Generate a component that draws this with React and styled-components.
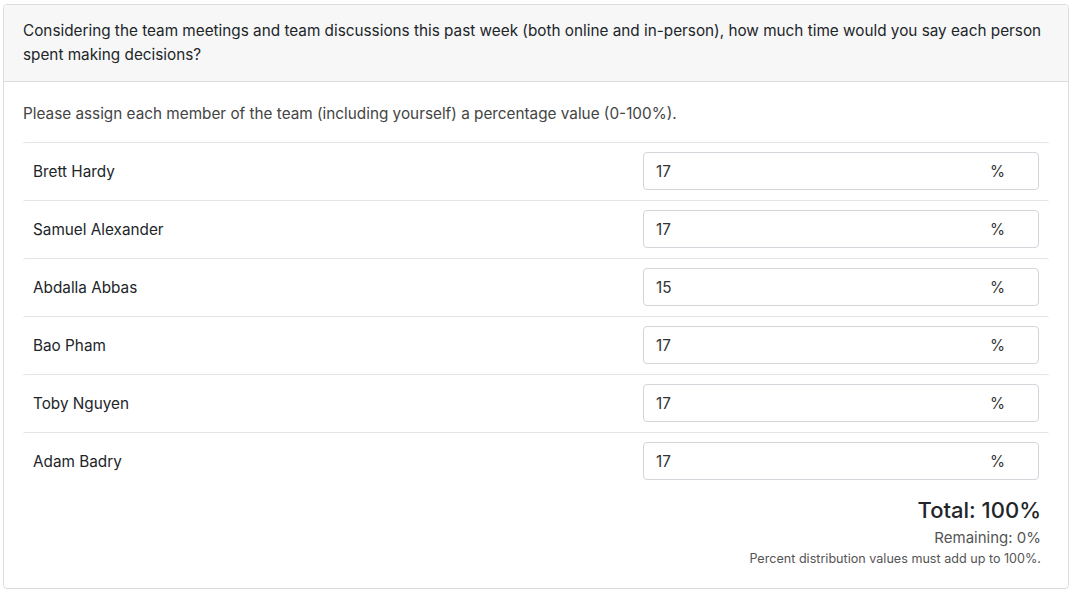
import React from "react";
import styled, { createGlobalStyle } from "styled-components";

const GlobalStyle = createGlobalStyle`
  body {
    margin: 0;
    background: #fff;
    font-family: Inter, "Helvetica Neue", Arial, sans-serif;
    color: #212529;
  }
`;

const Card = styled.div`
  margin: 4px 3px;
  border: 1px solid #dcdcdc;
  border-radius: 4px;
  overflow: hidden;
`;

const Header = styled.div`
  background: #f7f7f7;
  border-bottom: 1px solid #dcdcdc;
  padding: 14px 19px;
  font-size: 15.3px;
  line-height: 24px;
`;

const Body = styled.div`
  padding: 20px 19px 19px;
`;

const Intro = styled.p`
  margin: 0 0 16px;
  font-size: 15.3px;
  line-height: 24px;
  color: #444;
`;

const Table = styled.div`
  display: flex;
  flex-direction: column;
`;

const Row = styled.div`
  display: grid;
  grid-template-columns: 1fr 396px;
  align-items: center;
  padding: 9px 10px 10px 10px;
  border-top: 1px solid #e2e4e7;
  border-radius: 3px;
`;

const Name = styled.div`
  font-size: 15.3px;
`;

const InputBox = styled.div`
  display: flex;
  align-items: center;
  justify-content: space-between;
  height: 36px;
  border: 1px solid #d2d5d9;
  border-radius: 4px;
  padding: 0 33px 0 12px;
  font-size: 15.3px;
  color: #333;
`;

const Summary = styled.div`
  display: flex;
  flex-direction: column;
  align-items: flex-end;
  padding-right: 8px;
`;

const Total = styled.div`
  font-size: 22px;
  font-weight: 500;
  line-height: 30px;
  margin-top: 5px;
`;

const Remaining = styled.div`
  font-size: 15px;
  line-height: 23px;
  margin-top: 1px;
  color: #555;
`;

const Note = styled.div`
  font-size: 12.6px;
  line-height: 20px;
  color: #555;
`;

const people = [
  { name: "Brett Hardy", value: 17 },
  { name: "Samuel Alexander", value: 17 },
  { name: "Abdalla Abbas", value: 15 },
  { name: "Bao Pham", value: 17 },
  { name: "Toby Nguyen", value: 17 },
  { name: "Adam Badry", value: 17 },
];

const App = () => {
  const total = people.reduce((s, p) => s + p.value, 0);
  return (
    <>
      <GlobalStyle />
      <Card>
        <Header>
          Considering the team meetings and team discussions this past week (both online and in-person), how much time would you say each person spent making decisions?
        </Header>
        <Body>
          <Intro>Please assign each member of the team (including yourself) a percentage value (0-100%).</Intro>
          <Table>
            {people.map((p, i) => (
              <Row key={i}>
                <Name>{p.name}</Name>
                <InputBox>
                  <span>{p.value}</span>
                  <span>%</span>
                </InputBox>
              </Row>
            ))}
          </Table>
          <Summary>
            <Total>Total: {total}%</Total>
            <Remaining>Remaining: {100 - total}%</Remaining>
            <Note>Percent distribution values must add up to 100%.</Note>
          </Summary>
        </Body>
      </Card>
    </>
  );
};

export default App;
